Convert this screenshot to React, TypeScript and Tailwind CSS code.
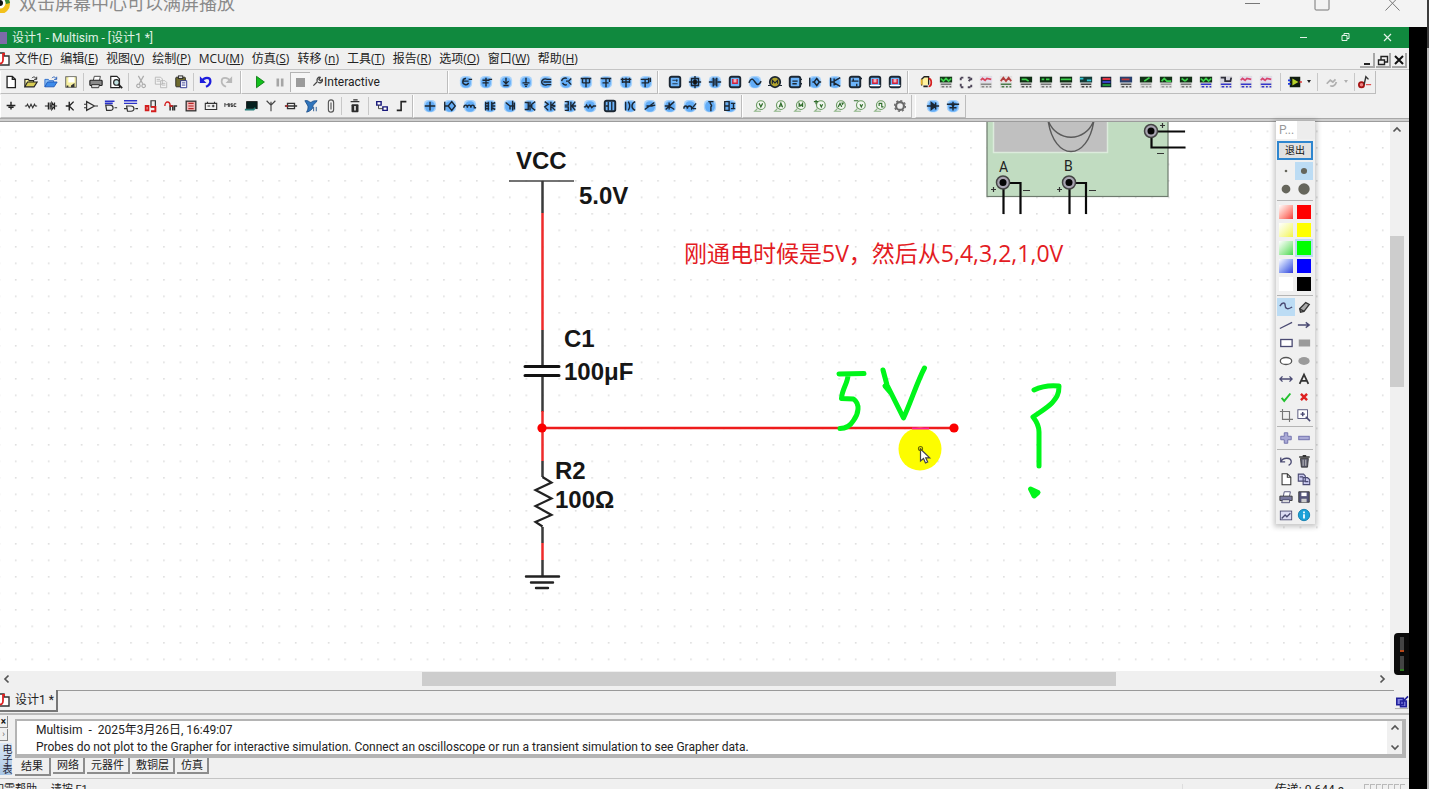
import React from "react";

type IconDef = { label: string; art: React.ReactNode };

const K = "#1c2733";

function blue(label: string, d: string, extra?: React.ReactNode): IconDef {
  return {
    label,
    art: (
      <>
        <rect x="1" y="1" width="14" height="14" rx="5" fill="#a9d3fb" />
        <rect x="2.500" y="2.500" width="11" height="12" rx="5" fill="#63adf7" />
        <path d={d} fill="none" stroke={K} strokeWidth="1.600" />
        {extra}
      </>
    ),
  };
}

function chip(label: string, inner: React.ReactNode): IconDef {
  return {
    label,
    art: (
      <>
        <rect x="2" y="2" width="12" height="12" rx="2" fill="#6cb4fa" stroke={K} strokeWidth="2.200" />
        {inner}
      </>
    ),
  };
}

function ink(label: string, d: string, color = "#222", width = 1.4, extra?: React.ReactNode): IconDef {
  return {
    label,
    art: (
      <>
        <path d={d} fill="none" stroke={color} strokeWidth={width} />
        {extra}
      </>
    ),
  };
}

function meter(label: string, screen: string, trace: string, traceColor: string, foot: string): IconDef {
  return {
    label,
    art: (
      <>
        <rect x="1" y="1" width="14" height="14" fill="#dedede" />
        <rect x="1" y="2" width="14" height="6.500" fill={screen} />
        <path d={trace} fill="none" stroke={traceColor} strokeWidth="2" />
        <path d="M2 10.500h12M3 13.500h3M8 13.500h2M12 13.500h2" fill="none" stroke={foot} strokeWidth="1.800" />
      </>
    ),
  };
}

function probe(label: string, mark: string): IconDef {
  return {
    label,
    art: (
      <>
        <circle cx="9" cy="7" r="5" fill="#f2f7f0" stroke="#6d9c64" strokeWidth="1.300" />
        <path d="M5 11l-3 3h7" fill="none" stroke="#8fb588" strokeWidth="1.400" />
        <path d={mark} fill="none" stroke="#2f6b2a" strokeWidth="1.300" />
      </>
    ),
  };
}

const fileIcons: IconDef[] = [
  { label: "新建", art: <path d="M3.500 1.500h6l3.500 3.500v9.500h-9.500zM9.500 1.500v3.500h3.500" fill="#fff" stroke="#222" strokeWidth="1.500" /> },
  {
    label: "打开",
    art: (
      <>
        <path d="M1 13.500V5h4l1 1.500h5V8" fill="#fdf7a0" stroke="#222" strokeWidth="1.300" />
        <path d="M1 13.500l3-5.500h11l-3.500 5.500z" fill="#d8cc55" stroke="#222" strokeWidth="1.300" />
        <path d="M9 3.500c2-2 4-1.500 5 1M14.500 2v3h-3" fill="none" stroke="#222" />
      </>
    ),
  },
  {
    label: "打开样本",
    art: (
      <>
        <path d="M1 13.500V5h4l1 1.500h5V8" fill="#8fc0f5" stroke="#2467c9" />
        <path d="M1 13.500l3-5.500h11l-3.500 5.500z" fill="#3d8bea" stroke="#1c55b5" />
        <path d="M9 3.500c2-2 4-1.500 5 1M14.500 2v3h-3" fill="none" stroke="#1c55b5" />
      </>
    ),
  },
  {
    label: "保存",
    art: (
      <>
        <rect x="2" y="2" width="12" height="12" fill="#f7f0a0" stroke="#555" />
        <rect x="5" y="2.500" width="7" height="6" fill="#fff" />
        <path d="M3 12h2v2H3zM12 9v5H8v-2z" fill="#333" />
      </>
    ),
  },
];

const printIcons: IconDef[] = [
  {
    label: "打印",
    art: (
      <>
        <path d="M5 6l1-4.500h7L12 6" fill="#fff" stroke="#333" />
        <rect x="1" y="6" width="14" height="6" rx="1" fill="#8b8b8b" stroke="#222" strokeWidth="1.300" />
        <path d="M3 11h9l-1 3.500H3z" fill="#ddd" stroke="#222" />
      </>
    ),
  },
  {
    label: "打印预览",
    art: (
      <>
        <path d="M2 1.500h7l3 3v10H2z" fill="#fff" stroke="#222" strokeWidth="1.300" />
        <circle cx="8.500" cy="8.500" r="3.200" fill="#c3e3e3" stroke="#222" strokeWidth="1.300" />
        <path d="M11 11l4 4" stroke="#222" strokeWidth="2.200" />
      </>
    ),
  },
];

const editIcons: IconDef[] = [
  ink("剪切", "M5 1l5 9M11 1L6 10", "#ababab", 1.4, <path d="M5 10.500a2 2 0 1 0 .1 0M11 10.500a2 2 0 1 0 .1 0" fill="none" stroke="#ababab" strokeWidth="1.300" />),
  { label: "复制", art: <path d="M1.500 2.500h6l2 2v6h-8zM7.500 6.500h5l2 2v6h-7zM3 5h4M3 7h4M9 9.500h4M9 11.500h4" fill="#f4f4f4" stroke="#b5b5b5" /> },
  {
    label: "粘贴",
    art: (
      <>
        <rect x="2" y="2.500" width="11" height="11" rx="1" fill="#6e6a2e" stroke="#222" />
        <rect x="5" y="1" width="5" height="3" fill="#ddd" stroke="#222" />
        <path d="M7.500 6.500h7v8h-7zM9 9h4M9 11.500h4" fill="#fff" stroke="#232c8c" />
      </>
    ),
  },
];

const undoIcons: IconDef[] = [
  ink("撤销", "M3 7c3-5 10-5 10 0 0 3-2 5-5 6.500", "#1d1ddd", 2.6, <path d="M1 1.500v7.500h7.500z" fill="#1d1ddd" />),
  ink("重做", "M13 7C10 2 3 2 3 7c0 3 2 5 5 6.500", "#b9b9b9", 2, <path d="M15 1.500v7.500H7.500z" fill="#b9b9b9" />),
];

const measureIcons: IconDef[] = [
  blue("电压源", "M4 7h7M8 4a3.500 3.500 0 1 0 3 5M11 5h4"),
  blue("电流源", "M4 6h8M4 9h7M8 3v10M11 5h4"),
  blue("接地", "M8 3v7M5 7l3 3 3-3M5 12h6"),
  blue("数字接地", "M8 3v6M4 9h8M6 11h4M7 13h2"),
  blue("三相源", "M3 8a4 4 0 0 1 6-3M3 8a4 4 0 0 0 6 3M5 8h9M9 5h5M9 11h5"),
  blue("三角源", "M3 7a4 4 0 0 1 6-3M4 9a4 4 0 0 0 5 2M8 7h3l3-3M11 8l3 3"),
  blue("双路源", "M2 4h12M8 4v10M4 4v5M12 4v5M4 9h8"),
  blue("信号源", "M2 4h12M8 4v10M4 9h7M12 4v4"),
  blue("脉冲源", "M2 5h12M8 3v11M4 3v6M12 3v6M4 8h8"),
  blue("时钟源", "M2 5h9M11 3v6M7 5v9M3 9h8M13 3v5"),
];

const red = <path d="M5.500 4.500v5h5v-5" fill="#f3aeb8" stroke="#cf1f3c" strokeWidth="1.600" />;

const virtualIcons: IconDef[] = [
  chip("电位器", <path d="M5 6h6M5 10h6M10 8V5" fill="none" stroke={K} />),
  blue("模拟芯片", "M1 8h14M8 1v14M4 4h8v8H4z", <rect x="6" y="5.500" width="4" height="5" fill="#111" />),
  blue("晶振", "M1 8h4M11 8h4M6 3v10M10 3v10M8 4v8"),
  chip("数码管", red),
  blue("保险丝", "M1 9c3-7 5-4 7-1s4 5 7-1"),
  {
    label: "电机",
    art: (
      <>
        <circle cx="8" cy="8" r="6" fill="#b3a52e" stroke={K} strokeWidth="2" />
        <path d="M5 10V6l3 3 3-3v4M0 12h4M12 12h4" fill="none" stroke={K} strokeWidth="1.300" />
      </>
    ),
  },
  chip("继电器", <path d="M14 5h2M14 10h2M5 7h6M5 10h5" fill="none" stroke={K} strokeWidth="1.500" />),
  blue("灯泡", "M2 3v10M5 8h2l3-4 3 4-3 4-3-4M13 8h2"),
  blue("晶体管", "M3 3v10M3 8h4M7 4v8M7 7l7-4M7 9l7 4"),
  chip("开关", <path d="M4 7h8M6 4v3M10 10v3M13 4h3" fill="none" stroke={K} strokeWidth="1.500" />),
  chip("七段显示", <>{red}<path d="M2 12h12" stroke="#fff" strokeWidth="1.500" /></>),
  chip("双位显示", <>{red}<path d="M2 12h12" stroke="#fff" strokeWidth="1.500" /></>),
];

const G = "#3bd24a";
const instrumentIcons: IconDef[] = [
  {
    label: "万用表",
    art: (
      <>
        <path d="M3 12V5l3-3h5v9" fill="#fff3a0" stroke="#222" strokeWidth="1.500" />
        <path d="M11 4c4 0 4 9 0 9" fill="none" stroke="#d61f1f" strokeWidth="2" />
        <path d="M5 13h5" stroke="#222" strokeWidth="2" />
        <path d="M3 5v6" stroke="#e5b12a" strokeWidth="2" />
      </>
    ),
  },
  meter("函数发生器", "#143a18", "M2 4l3 3 3-3 3 3 3-3", G, "#777"),
  { label: "瓦特计", art: <path d="M2 3h4M2 3v4M10 3h4v3M2 10v4h4M10 14h4v-4M11 7l3-3" fill="none" stroke="#4e4658" strokeWidth="2.200" strokeDasharray="3 1" /> },
  meter("示波器", "#e3dfee", "M2 6l2-2 3 2 2-2 5 1", "#d9455b", "#888"),
  meter("四通道示波器", "#e8e2e2", "M2 7l3-4 3 4 3-4 3 4", "#b23d3d", "#4b7a4b"),
  meter("波特测试仪", "#0f2f14", "M3 5h5l3 2", G, "#555"),
  meter("频率计", "#0f2f14", "M3 5h3M8 5h4", G, "#777"),
  meter("字发生器", "#0f2f14", "M2 5h12", G, "#555"),
  meter("逻辑转换仪", "#143a35", "M1 4h4M9 6h5", "#2fc6d6", "#444"),
  {
    label: "逻辑分析仪",
    art: (
      <>
        <rect x="2" y="2" width="12" height="12" fill="#123" />
        <path d="M4 4.500h9" stroke="#e03340" strokeWidth="2.500" />
        <path d="M4 8h9" stroke="#3a46d8" strokeWidth="2" />
        <path d="M4 11.500h9" stroke="#1f8f3a" strokeWidth="2.500" />
      </>
    ),
  },
  meter("伏安特性分析仪", "#27406e", "M3 5h9", "#c03838", "#555"),
  meter("失真分析仪", "#123016", "M6 7l6-4", G, "#999"),
  meter("频谱分析仪", "#123016", "M3 7l3-3 3 3h5", G, "#999"),
  meter("网络分析仪", "#123016", "M3 4l4 3M10 4l-3 3", G, "#777"),
  meter("安捷伦发生器", "#123016", "M2 4l3 3 3-3 3 3 3-3", G, "#3636c9"),
  meter("安捷伦万用表", "#d5d5de", "M2 3h5v4h6l1-4", "#30303a", "#3636c9"),
  meter("安捷伦示波器", "#e3dfee", "M2 6l2-2 3 2 2-2 5 1", "#d8456f", "#3636c9"),
  meter("泰克示波器", "#e3dfee", "M2 6l2-2 3 2 2-2 5 1", "#d8456f", "#3636c9"),
];

const partIcons: IconDef[] = [
  ink("电源", "M8 3v4M3 7.500h10M5 9.500h6M8 10v2", "#222", 1.6),
  ink("电阻", "M1 8h2l1-2 2 4 2-4 2 4 2-4 1 2h2", "#333", 1.3),
  ink("二极管", "M1 8h4M5 4v8M7 4v8M7 8h2M9 4l3 4-3 4zM12 4v8M12 8h3"),
  ink("晶体管", "M2 8h4M6 3v10M6 8l5-5M6 8l5 5", "#222", 1.6),
  ink("模拟器件", "M3 3l9 5-9 5zM0 6h3M0 10h3M12 8h4", "#333", 1.4),
  ink("TTL", "M2 7h5c4 0 5 6 0 6H3zM12 10h3", "#333", 1.4, <path d="M1 2.500h11M1 5h9" stroke="#2b32c9" strokeWidth="1.800" />),
  ink("CMOS", "M3 8h5c4 0 5 6 0 6H4zM0 11h3M13 11h3", "#333", 1.4, <path d="M0 2h15M0 5h15" stroke="#2b32c9" strokeWidth="1.500" />),
  ink("其他数字器件", "M8 9V2h5v7z", "#333", 1.4, <path d="M2 8v5h3V8zM8 9h5v5H8" fill="none" stroke="#d31c1c" strokeWidth="2.200" />),
  ink("混合器件", "M7 13V8h3v5M12 13V8h3", "#333", 1.7, <path d="M1 8c0-6 6-6 6 0h3" fill="none" stroke="#d31c1c" strokeWidth="1.600" />),
  { label: "指示器", art: <><rect x="2.500" y="2.500" width="11" height="11" fill="#f0b6b6" stroke="#333" strokeWidth="1.500" /><path d="M5 5h6M5 8h6M5 11h6" stroke="#b62727" strokeWidth="1.300" /></> },
  ink("功率器件", "M1.500 5h13v7h-13zM4 3v2M12 3v2M4 8h3M9 8h3M10.500 6.500v3", "#333", 1.3),
  ink("杂项", "M1 9V5l2 2 2-2v4M6.500 5v4M10 5.500H8v1.500h2v1.500H8M14 5.500h-2.500v3H14", "#333", 1.1),
  { label: "外设", art: <><rect x="3" y="3" width="12" height="8" fill="#06201f" stroke="#111" /><path d="M1 12h10l2-2" fill="none" stroke="#267c78" strokeWidth="2" /></> },
  ink("射频", "M8 14V7M3 2l5 5 5-5M8 7V3", "#444", 1.3),
  ink("机电器件", "M1 8h3M12 8h3M4 5h8v6H4zM4 8h8", "#333", 1.5, <path d="M2 8h2" stroke="#c22" strokeWidth="2" />),
  { label: "NI 器件", art: <path d="M1 2c4-1 5 2 7 2 2-2 4-2 7-2-2 3-4 4-5 6 1 3-3 6-7 7 2-4 2-6 1-8zM11 9v5M14 9v5" fill="#2f75bd" stroke="#1d4f8a" /> },
  ink("连接器", "M5 4c0-4 6-4 6 0v8c0 4-6 4-6 0zM8 4v8", "#555", 1.3),
];

const mcuIcons: IconDef[] = [
  { label: "微控制器", art: <><rect x="4" y="6" width="8" height="9" rx="1" fill="#2b2b2b" /><path d="M3 3h10M6 1h5" stroke="#333" strokeWidth="1.600" /><path d="M8 8v5" stroke="#ddd" strokeWidth="2" /></> },
];

const hierarchyIcons: IconDef[] = [
  { label: "层次块", art: <><path d="M2 3h5v4H2zM9 9h5v4H9z" fill="#fff" stroke="#16167a" strokeWidth="1.600" /><path d="M4 7v4h5" fill="none" stroke="#333" /></> },
  ink("总线", "M2 13h5V3h6", "#222", 1.8),
];

const basicIcons: IconDef[] = [
  blue("电容", "M2 8h12M8 3v10"),
  blue("可变元件", "M2 3v10M2 8h4M6 8l4-5 4 5-4 5z"),
  blue("线圈", "M1 10c0-4 4-4 4 0 0-4 4-4 4 0 0-4 4-4 4 0h2"),
  blue("变压器", "M3 3v10M6 3v10M3 5h4M3 8h4M3 11h4M10 3v10M14 4l-4 2M14 8h-4M14 12l-4-2"),
  blue("电位计", "M3 4l5 4v4M11 2v11M8 8h5M13 4v8"),
  blue("变压器二", "M2 4h4v8H2M6 8h4M14 3l-4 3v4l4 3M8 3v10"),
  blue("变压器三", "M2 3l4 3-4 3 4 4M9 3v10M14 3l-4 4 4 1-4 1 4 4"),
  blue("变压器四", "M2 3h4v4H2M2 9h4v4H2M9 3v10M14 3l-4 5 4 5M11 8h4"),
  blue("电阻", "M1 9h2l1-2 2 3 2-3 2 3 2-2h3"),
  chip("排阻", <path d="M6 3v10M10 3v10M3 8h3" fill="none" stroke={K} strokeWidth="1.500" />),
  blue("空心线圈", "M3 3v10M6 3c2 3 2 7 0 10M14 3c-5 2-5 8 0 10"),
  blue("可变电阻", "M2 12L13 4M4 8h7M9 8l5-1"),
  blue("上拉电阻", "M2 8h5M7 4v8M7 8l6-5M7 8l6 4M3 12l9-8"),
  blue("受控源", "M1 11c0-4 4-4 4 0 0-4 5-4 5 0l5-6M11 11h4"),
  blue("电压控制", "M6 3h6M9 3c-3 2 3 4 0 6v5"),
  blue("组合", "M2 3h5v10H2zM2 8h5M9 5h5M9 11h5M12 5v6"),
];

const probeIcons: IconDef[] = [
  probe("电压探针", "M7 5l2 4 2-4"),
  probe("电流探针", "M7 9.500l2-5 2 5M8 8h2"),
  probe("功率探针", "M7 9V5l2 3 2-3v4"),
  probe("差分探针", "M8 6l1.500 3L11 6M1 3h5M3.500 1v5"),
  probe("电压电流探针", "M6 9l2-4 2 4M10 4l1 2 1-2"),
  probe("参考探针", "M8 6l1.500 3L11 6M1 2h5"),
  probe("数字探针", "M7 8V5h3v4h2"),
  {
    label: "探针设置",
    art: <><circle cx="8" cy="8" r="4.500" fill="none" stroke="#6a6a6a" strokeWidth="2.500" /><circle cx="8" cy="8" r="6.200" fill="none" stroke="#6a6a6a" strokeWidth="1.500" strokeDasharray="2.400 2.400" /></>,
  },
];

const diodeIcons: IconDef[] = [
  blue("虚拟二极管", "M1 8h14M6 4l5 4-5 4zM11 4v8", <path d="M6 4l5 4-5 4z" fill={K} />),
  blue("稳压二极管", "M1 6h14M4 10h8M8 3v10", <path d="M5 5h6l-3 5z" fill={K} />),
];

function ToolButton({ icon }: { icon: IconDef }) {
  return (
    <button type="button" aria-label={icon.label} className="flex h-5 w-5 shrink-0 items-center justify-center">
      <svg viewBox="0 0 16 16" className="size-[14px]" aria-hidden="true">
        {icon.art}
      </svg>
    </button>
  );
}

function Group({ icons, className = "" }: { icons: IconDef[]; className?: string }) {
  return (
    <div className={`flex shrink-0 items-center ${className}`}>
      {icons.map((i) => (
        <ToolButton key={i.label} icon={i} />
      ))}
    </div>
  );
}

const bar = "flex h-[23px] shrink-0 items-center border-r border-b border-[#bdbdbd] border-l border-l-white";
const sep = "h-[18px] w-px shrink-0 bg-[#c8c8c8]";

const menus: [string, string][] = [
  ["文件", "F"],
  ["编辑", "E"],
  ["视图", "V"],
  ["绘制", "P"],
  ["MCU", "M"],
  ["仿真", "S"],
  ["转移 ", "n"],
  ["工具", "T"],
  ["报告", "R"],
  ["选项", "O"],
  ["窗口", "W"],
  ["帮助", "H"],
];

function DocIcon() {
  return (
    <svg viewBox="0 0 16 16" className="h-4 w-[11px] shrink-0" preserveAspectRatio="xMaxYMid slice" aria-hidden="true">
      <path d="M3 2h6v3h5v9H5" fill="#fff" stroke="#333" strokeWidth="1.400" />
      <path d="M10 3H8v6c0 3-2 4-4 3" fill="none" stroke="#d22" strokeWidth="1.800" />
    </svg>
  );
}

function PlayerBar() {
  return (
    <header className="flex h-[27px] shrink-0 items-start justify-between overflow-hidden bg-[#f3f3f3]">
      <div className="-mt-[5px] flex items-start gap-2">
        <svg viewBox="0 0 11 18" className="h-[18px] w-[11px]" aria-hidden="true">
          <circle cx="0" cy="9" r="10" fill="#f2c11d" />
          <path d="M2 0a10 10 0 0 1 8 8l-4 1z" fill="#3c8a35" />
          <circle cx="0" cy="8" r="5.500" fill="#fff" />
          <circle cx="0" cy="8" r="3" fill="#111" />
        </svg>
        <h1 className="text-[18px] leading-[18px] text-[#8a8a8a]">双击屏幕中心可以满屏播放</h1>
      </div>
      <div className="mr-[27px] flex gap-[54px] text-[#777]">
        <button type="button" aria-label="最小化" className="h-[14px] w-4">
          <svg viewBox="0 0 16 14" className="h-[14px] w-4"><path d="M1 3.500h15" stroke="currentColor" /></svg>
        </button>
        <button type="button" aria-label="最大化" className="h-[14px] w-4">
          <svg viewBox="0 0 16 14" className="h-[14px] w-4"><rect x="1" y="-4" width="14" height="14" rx="1" fill="none" stroke="currentColor" /></svg>
        </button>
        <button type="button" aria-label="关闭" className="h-[14px] w-4">
          <svg viewBox="0 0 16 14" className="h-[14px] w-4"><path d="M1.500-4l14 14.500M15.500-4L1.500 10.500" stroke="currentColor" /></svg>
        </button>
      </div>
    </header>
  );
}

function TitleBar() {
  return (
    <div className="flex h-[21px] shrink-0 items-center justify-between bg-[#10893e] text-[#e3f3e8]">
      <div className="flex items-center gap-[5px]">
        <span className="h-3 w-[7px] bg-[#7d6aa8]" />
        <span className="text-[12px] leading-none">设计1 - Multisim - [设计1 *]</span>
      </div>
      <div className="mr-4 flex gap-[31px]">
        <button type="button" aria-label="最小化" className="size-[11px]">
          <svg viewBox="0 0 11 11" className="size-[11px]"><path d="M2 5.500h7" stroke="currentColor" /></svg>
        </button>
        <button type="button" aria-label="还原" className="size-[11px]">
          <svg viewBox="0 0 11 11" className="size-[11px]"><path d="M2 3.500h5v5H2zM4 3.500v-2h5v5H7" fill="none" stroke="currentColor" /></svg>
        </button>
        <button type="button" aria-label="关闭" className="size-[11px]">
          <svg viewBox="0 0 11 11" className="size-[11px]"><path d="M2 2l7 7M9 2l-7 7" stroke="currentColor" strokeWidth="1.200" /></svg>
        </button>
      </div>
    </div>
  );
}

function MenuBar() {
  const mdi = "flex size-[15px] items-center justify-center border-r-2 border-b-2 border-[#a8a8a8] bg-[#f0f0f0]";
  return (
    <nav className="flex h-[22px] shrink-0 items-center justify-between border-b border-[#c4c4c4]">
      <div className="flex items-center">
        <DocIcon />
        <ul className='ml-1 flex items-center gap-2 font-["Open_Sans","Noto_Sans_CJK_SC",sans-serif] text-[12px] leading-none text-[#222]'>
          {menus.map(([name, key]) => (
            <li key={name}>
              <button type="button" className="whitespace-pre">
                {name}(<span className="underline">{key}</span>)
              </button>
            </li>
          ))}
        </ul>
      </div>
      <div className="mr-[2px] flex gap-px self-end pb-px">
        <button type="button" aria-label="最小化文档" className={mdi}>
          <svg viewBox="0 0 12 12" className="size-3"><path d="M3 10h6" stroke="#222" strokeWidth="2" /></svg>
        </button>
        <button type="button" aria-label="还原文档" className={mdi}>
          <svg viewBox="0 0 12 12" className="size-3"><path d="M1.500 6h6v4.500h-6zM4 6V2.500h6.500V8H8" fill="none" stroke="#222" strokeWidth="1.400" /></svg>
        </button>
        <button type="button" aria-label="关闭文档" className={mdi}>
          <svg viewBox="0 0 12 12" className="size-3"><path d="M2 2l8 8M10 2l-8 8" stroke="#111" strokeWidth="2" /></svg>
        </button>
      </div>
    </nav>
  );
}

function Toolbars() {
  return (
    <>
      <div className="flex h-6 shrink-0 items-center overflow-hidden">
        <div className={`${bar} w-[241px] justify-between pr-1`}>
          <Group icons={fileIcons} />
          <span className={sep} />
          <Group icons={printIcons} />
          <span className={sep} />
          <Group icons={editIcons} />
          <span className={sep} />
          <Group icons={undoIcons} />
        </div>
        <div className={`${bar} w-[207px] pl-2`}>
          <ToolButton icon={{ label: "运行", art: <path d="M4 1.500l9 6.500-9 6.500z" fill="#12c01c" stroke="#0d7a14" /> }} />
          <ToolButton icon={{ label: "暂停", art: <path d="M4 4h3v9H4zM9 4h3v9H9z" fill="#a5a5a5" /> }} />
          <button type="button" aria-label="停止" className="flex size-5 shrink-0 items-center justify-center border-t border-l border-[#b4b4b4] bg-[#f6f6f6]">
            <span className="size-[9px] bg-[#9c9c9c]" />
          </button>
          <button type="button" className="ml-[2px] flex items-center gap-px text-[12px] leading-none text-[#222]">
            <svg viewBox="0 0 16 16" className="size-[11px]" aria-hidden="true">
              <path d="M2 14l6-6M8 8c-2-3 1-7 4-6l-2 3 2 2 3-2c1 4-3 6-6 4" fill="none" stroke="#444" strokeWidth="1.800" />
            </svg>
            Interactive
          </button>
        </div>
        <div className={`${bar} w-[210px] pl-[7px]`}>
          <Group icons={measureIcons} />
        </div>
        <div className={`${bar} w-[250px] pl-[6px]`}>
          <Group icons={virtualIcons} />
        </div>
        <div className={`${bar} w-[468px] pl-[7px]`}>
          <Group icons={instrumentIcons} />
          <span className={`${sep} ml-1`} />
          <div className="flex shrink-0 items-center pl-1">
            <ToolButton icon={{ label: "探测器", art: <><rect x="2" y="2" width="12" height="12" fill="#101c10" /><path d="M5 4l7 4-7 4z" fill="#b7d32b" /><path d="M0 6h3M0 10h3" stroke="#1d39e0" strokeWidth="2" /><path d="M13 8h3" stroke="#d22" strokeWidth="1.500" /></> }} />
            <span className="mx-[2px] border-x-2 border-t-[3px] border-x-transparent border-t-[#222]" />
          </div>
          <span className={`${sep} ml-1`} />
          <div className="flex shrink-0 items-center pl-1">
            <ToolButton icon={{ label: "电流钳", art: <path d="M2 10l4-4 3 2 3-3M6 12c2 2 6 0 7-4" fill="none" stroke="#b0b0b0" strokeWidth="2" /> }} />
            <span className="mx-[2px] border-x-2 border-t-[3px] border-x-transparent border-t-[#b0b0b0]" />
          </div>
          <span className={`${sep} ml-1`} />
          <ToolButton icon={{ label: "LabVIEW", art: <><circle cx="4" cy="11" r="3" fill="#f08080" stroke="#a51313" strokeWidth="2" /><path d="M7 11l2-9 3 3" fill="none" stroke="#333" strokeWidth="1.600" /><path d="M9 11h6" stroke="#e05050" strokeWidth="1.400" /></> }} />
        </div>
      </div>
      <div className="flex h-6 shrink-0 items-center overflow-hidden">
        <div className={`${bar} w-[413px]`}>
          <Group icons={partIcons} />
          <span className={sep} />
          <Group icons={mcuIcons} className="px-[3px]" />
          <span className={sep} />
          <Group icons={hierarchyIcons} className="pl-[3px]" />
        </div>
        <div className={`${bar} w-[329px] pl-[6px]`}>
          <Group icons={basicIcons} />
        </div>
        <div className={`${bar} w-[170px] pl-[7px]`}>
          <Group icons={probeIcons} />
        </div>
        <div className={`${bar} ml-[3px] w-[51px] pl-[7px]`}>
          <Group icons={diodeIcons} />
        </div>
      </div>
    </>
  );
}

function Terminal({ x, y }: { x: number; y: number }) {
  return (
    <>
      <circle cx={x} cy={y} r="6.500" fill="#a7a3b0" stroke="#444" strokeWidth="1.500" />
      <circle cx={x} cy={y} r="3.500" fill="#050505" />
    </>
  );
}

function Schematic() {
  return (
    <svg className="block h-full w-full" role="img" aria-label="RC 电路原理图">
      <defs>
        <pattern id="grid" x="509" y="147" width="16.47" height="16.5" patternUnits="userSpaceOnUse">
          <rect width="1.600" height="1.600" fill="#dedede" />
        </pattern>
      </defs>
      <g transform="translate(0 -122)">
        <rect x="0" y="122" width="100%" height="100%" fill="#fff" />
        <rect x="0" y="122" width="100%" height="100%" fill="url(#grid)" />

        <g>
          <rect x="987" y="100" width="181" height="96.500" fill="#c1dcc1" stroke="#6d7a6d" strokeWidth="1.200" />
          <rect x="993.500" y="100" width="114" height="52.500" fill="#c0c0c0" stroke="#dcebdc" strokeWidth="1.500" />
          <path d="M1048 120c6 42 40 42 46 0M1048 120c8 23 38 23 46 0" fill="none" stroke="#5a5a5a" strokeWidth="1.400" />
          <path d="M1003.500 182v32M1003.500 183h17v31M1069.500 182v32M1069.500 183h16.500v31M1151 131.500h34M1151.500 131v16.500h34" fill="none" stroke="#0a0a0a" strokeWidth="2.200" />
          <Terminal x={1003} y={182.500} />
          <Terminal x={1069} y={182.500} />
          <Terminal x={1151} y={131} />
          <path d="M991 189.500h5M993.500 187v5M1057 189.500h5M1059.500 187v5M1160 125.500h5M1162.500 123v5M1023 190.500h7M1089 190.500h7M1157 153.500h7" stroke="#333" strokeWidth="1.200" />
          <text x="999" y="172" className="fill-[#222] text-[14px]">A</text>
          <text x="1064" y="171" className="fill-[#222] text-[14px]">B</text>
        </g>

        <g fill="none" strokeWidth="2.500">
          <path d="M509 181h65" stroke="#444" strokeWidth="1.500" />
          <path d="M542.500 181v32M542.500 330v36M542.500 376v36M542.500 461v16M542.500 527v16M542.500 560v16" stroke="#3a3a3a" />
          <path d="M542.500 213v117M542.500 411v50M542.500 543v17" stroke="#ee2b2b" />
          <path d="M525 366.500h34M525 375.500h34" stroke="#111" strokeWidth="3" strokeLinecap="round" />
          <path d="M542.500 477l9 5.500-16 7.500 16 8.500-16 7.500 16 9-16 7 7 4.500" stroke="#222" strokeWidth="2.200" />
          <path d="M526 576.500h33M531 582.500h22M536 588h12" stroke="#222" strokeWidth="2.400" strokeLinecap="round" />
          <path d="M542 428h412" stroke="#ee1c1c" />
        </g>
        <circle cx="542" cy="428" r="4.600" fill="#fb0000" />
        <circle cx="954" cy="428" r="4.600" fill="#fb0000" />
        <g className='fill-[#161616] font-["Liberation_Sans",Arial,sans-serif] text-[24px] font-bold'>
          <text x="516" y="169">VCC</text>
          <text x="579" y="204">5.0V</text>
          <text x="564" y="347">C1</text>
          <text x="564" y="380">100μF</text>
          <text x="555" y="479">R2</text>
          <text x="555" y="508">100Ω</text>
        </g>
        <text x="684" y="262" className='fill-[#e31b23] font-["Open_Sans","Noto_Sans_CJK_SC",sans-serif] text-[23px]'>刚通电时候是5V，然后从5,4,3,2,1,0V</text>

        <circle cx="920" cy="449" r="21.500" fill="#fdfd00" />
        <path d="M912 428.500h17" stroke="#ff1e9c" strokeWidth="2" />
        <path d="M920.500 449v12l3-2.500 2 4.500 2.200-1-2-4.200h4z" fill="#fff" stroke="#444" strokeWidth="1.200" />
        <circle cx="920.500" cy="448.500" r="2" fill="none" stroke="#6b6b00" strokeWidth="1.200" />

        <g fill="none" stroke="#00f51a" strokeWidth="5" strokeLinecap="round" strokeLinejoin="round">
          <path d="M839 374l25-.5M848 375c0 8-6 14-6.500 23.500l12 .5c7 5 5 15 0 21.500-3 5-7 8-13.500 8" />
          <path d="M883 370l4 15 16.500 33c7-15 14-37 21-50M885 386l6 7" />
          <path d="M1034 390c8-4 15-5 25-4 0 8-2 11-7 17-5 5-12 9-19 14 4 5 6 9 6 15v34" />
          <path d="M1030.500 489l3.500 7 4-3.500z" fill="#00f51a" />
        </g>
      </g>
    </svg>
  );
}

type Tool = { label: string; art: React.ReactNode; active?: boolean };

const P = "#4a4a72";
const sizeTools: Tool[] = [
  { label: "细笔", art: <circle cx="8" cy="8" r="1.500" fill="#66665c" /> },
  { label: "中笔", art: <circle cx="8" cy="8" r="3.500" fill="#66665c" />, active: true },
  { label: "粗笔", art: <circle cx="8" cy="8" r="5" fill="#66665c" /> },
  { label: "特粗笔", art: <circle cx="8" cy="8" r="6.500" fill="#66665c" /> },
];

const drawTools: Tool[] = [
  { label: "曲线", art: <path d="M1 7c3-5 6-4 6-1s2 6 8 2" fill="none" stroke={P} strokeWidth="1.600" />, active: true },
  { label: "橡皮", art: <path d="M3 10l7-7 4 2-6 8-4 1zM3 10l5 3" fill="#a9a9a9" stroke="#333" strokeWidth="1.500" /> },
  { label: "直线", art: <path d="M1 12L15 5" stroke={P} strokeWidth="1.500" /> },
  { label: "箭头", art: <path d="M1 8h13M10 5l4 3-4 3" fill="none" stroke={P} strokeWidth="1.500" /> },
  { label: "矩形", art: <rect x="2" y="4" width="13" height="8" fill="#fff" stroke={P} strokeWidth="1.500" /> },
  { label: "实心矩形", art: <rect x="2" y="4" width="13" height="8" fill="#9a9a9a" /> },
  { label: "椭圆", art: <ellipse cx="8" cy="8" rx="6.500" ry="4" fill="#fff" stroke="#555" strokeWidth="1.500" /> },
  { label: "实心椭圆", art: <ellipse cx="8" cy="8" rx="6.500" ry="4.500" fill="#9a9a9a" /> },
  { label: "双向箭头", art: <path d="M1 8h14M4 5L1 8l3 3M12 5l3 3-3 3" fill="none" stroke={P} strokeWidth="1.500" /> },
  { label: "文字", art: <path d="M3 13.500L8 3l5 10.500M5 10h6" fill="none" stroke="#333" strokeWidth="2" /> },
  { label: "对勾", art: <path d="M3 9l3 3.500L13 4" fill="none" stroke="#22c12f" strokeWidth="2.200" /> },
  { label: "叉号", art: <path d="M4.500 4.500l7 7M11.500 4.500l-7 7" stroke="#dd1f1f" strokeWidth="2.800" /> },
  { label: "截图", art: <path d="M4 1v12h12M1 4h11v12" fill="none" stroke="#777" strokeWidth="1.300" /> },
  { label: "放大", art: <><rect x="1" y="2" width="11" height="10" fill="#fff" stroke={P} /><path d="M4 7h5M6.500 4.500v5M10 10l5 5" stroke={P} strokeWidth="1.700" /></> },
];

const stepTools: Tool[] = [
  { label: "增加", art: <path d="M6 2h4v4h4v4h-4v4H6v-4H2V6h4z" fill="#a9a9d6" stroke="#6a6aa8" /> },
  { label: "减少", art: <rect x="2" y="6" width="12" height="4" fill="#a9a9d6" stroke="#6a6aa8" /> },
];

const fileTools: Tool[] = [
  { label: "撤消笔画", art: <path d="M2 4v5h5M2 9c3-6 12-5 12 0 0 2-1 3-3 4" fill="none" stroke={P} strokeWidth="1.500" /> },
  { label: "清空", art: <><path d="M4 5h9l-1 10H5z" fill="#5d5d6e" stroke="#333" /><path d="M2.500 3.500h12M6.500 2h4" stroke="#333" strokeWidth="1.700" /><path d="M7 6.500v7M10 6.500v7" stroke="#ccc" /></> },
  { label: "新页", art: <path d="M3.500 2h6l4 4v8.500h-10zM9.500 2v4h4" fill="#fff" stroke="#333" strokeWidth="1.200" /> },
  { label: "复制页", art: <path d="M1.500 2.500h6l2 2v6h-8zM7 6.500h5l2.500 2v6H7zM3 5.500h4M9 11h4" fill="#c8c8ee" stroke={P} strokeWidth="1.300" /> },
  { label: "打印批注", art: <><path d="M5 7l1-5h7l-1 5" fill="#fff" stroke={P} /><path d="M1 7h14v5H1z" fill="#7b7ba0" stroke="#333" /><path d="M4 11h8v3.500H3z" fill="#ddd" stroke={P} /></> },
  { label: "保存批注", art: <><path d="M2 2h12v12H2z" fill="#55557a" stroke="#333" /><path d="M5 3h6v4H5z" fill="#fff" /><path d="M5 10h6v4H5z" fill="#ccc" /></> },
  { label: "图片", art: <><rect x="1.500" y="3.500" width="13" height="10" fill="#dcdcf4" stroke={P} /><path d="M3 12l4-4 2 2 4-4" fill="none" stroke={P} strokeWidth="1.500" /></> },
  { label: "关于", art: <><circle cx="8" cy="8" r="6.500" fill="#1ba1d8" stroke="#0f7cab" /><path d="M8 7v5M8 4v2" stroke="#fff" strokeWidth="2" /></> },
];

const swatches = [
  ["浅红", "bg-linear-to-br from-white to-[#ee3a3a]"],
  ["红", "bg-[#ff0000]"],
  ["浅黄", "bg-linear-to-br from-white to-[#f4f43a]"],
  ["黄", "bg-[#ffff00]"],
  ["浅绿", "bg-linear-to-br from-white to-[#3ad84a]"],
  ["绿", "bg-[#00ff00]"],
  ["浅蓝", "bg-linear-to-br from-white to-[#3a3ad8]"],
  ["蓝", "bg-[#0000ff]"],
  ["白", "bg-white"],
  ["黑", "bg-black"],
];

function ToolGrid({ tools }: { tools: Tool[] }) {
  return (
    <div className="grid grid-cols-2">
      {tools.map((t) => (
        <button
          key={t.label}
          type="button"
          aria-label={t.label}
          className={`flex h-[18px] items-center justify-center ${t.active ? "bg-[#bcdcf4]" : ""}`}
        >
          <svg viewBox="0 0 16 16" className="size-[14px]" aria-hidden="true">
            {t.art}
          </svg>
        </button>
      ))}
    </div>
  );
}

const Rule = () => <div className="my-[2px] h-px bg-[#b5b5b5]" />;

function Palette() {
  return (
    <aside className="absolute -top-px right-[94px] z-10 w-[39px] bg-[#f0f0f0] pr-[2px] pl-px shadow-[0_1px_5px_2px_rgba(0,0,0,0.22)]">
      <div className="-mr-[2px] -ml-px flex h-[18px] items-center justify-between bg-white text-[12px] leading-none text-[#999]">
        <span className="pl-[3px]">P...</span>
        <span className="h-[18px] w-[18px] bg-[#ededed]" />
      </div>
      <button type="button" className="my-[2px] flex h-[19px] w-full items-center justify-center border-2 border-[#2f86cf] bg-[#e1e1e1] text-[10px] leading-none text-[#111]">
        退出
      </button>
      <ToolGrid tools={sizeTools} />
      <Rule />
      <div className="grid grid-cols-2">
        {swatches.map(([name, fill]) => (
          <button
            key={name}
            type="button"
            aria-label={name}
            className={`flex h-[18px] items-center justify-center ${name === "绿" ? "bg-[#bcdcf4]" : ""}`}
          >
            <span className={`size-[14px] ${fill}`} />
          </button>
        ))}
      </div>
      <Rule />
      <ToolGrid tools={drawTools} />
      <Rule />
      <ToolGrid tools={stepTools} />
      <Rule />
      <ToolGrid tools={fileTools} />
    </aside>
  );
}

function Chevron({ d, label }: { d: string; label: string }) {
  return (
    <button type="button" aria-label={label} className="flex size-[14px] items-center justify-center">
      <svg viewBox="0 0 10 10" className="size-[10px]" aria-hidden="true">
        <path d={d} fill="none" stroke="#555" strokeWidth="1.700" />
      </svg>
    </button>
  );
}

const UP = "M1.500 6.500L5 3l3.500 3.500";
const DOWN = "M1.500 3.500L5 7l3.500-3.500";
const LEFT = "M6.500 1.500L3 5l3.500 3.500";
const RIGHT = "M3.500 1.500L7 5l-3.500 3.500";

function Workspace() {
  return (
    <main className="relative flex min-h-0 flex-1 flex-col">
      <div className="flex min-h-0 flex-1">
        <div className="min-w-0 flex-1 overflow-hidden">
          <Schematic />
        </div>
        <div className="mr-[5px] flex w-[14px] shrink-0 flex-col items-center bg-[#f0f0f0] pt-px">
          <Chevron d={UP} label="向上滚动" />
          <span className="h-[18%]" />
          <span className="h-[151px] w-full bg-[#cdcdcd]" />
        </div>
      </div>
      <div className="flex h-[16px] shrink-0 items-center pr-5">
        <Chevron d={LEFT} label="向左滚动" />
        <div className="flex flex-1 justify-center">
          <span className="ml-[149px] h-[14px] w-[51%] bg-[#cdcdcd]" />
        </div>
        <Chevron d={RIGHT} label="向右滚动" />
      </div>
      <Palette />
      <div className="absolute right-0 bottom-[12px] flex h-[42px] w-[15px] flex-col items-center justify-center gap-1 rounded-l-sm bg-[#0a0a0a]">
        <span className="h-[15px] w-1 border-b-2 border-[#b5481b] bg-[#444]" />
        <span className="h-[15px] w-1 border-b-2 border-[#2f7a1f] bg-[#444]" />
      </div>
    </main>
  );
}

function SheetTabs() {
  return (
    <div className="mt-[3px] flex h-[25px] shrink-0 items-start justify-between border-b-2 border-[#b9b9b9]">
      <button type="button" className="flex h-[22px] items-center gap-1 border-r-2 border-b-2 border-[#777] pr-[2px] text-[12px] leading-none text-[#222]">
        <DocIcon />
        设计1 *
      </button>
      <span className="h-px flex-1 bg-[#999]" />
      <button type="button" aria-label="切换视图" className="mt-1 h-4 w-[15px]">
        <svg viewBox="0 0 16 16" className="h-4 w-[15px]" aria-hidden="true">
          <path d="M3 4h7v7H3zM7 7h6v6H7zM9 8l6-6" fill="#8080e0" stroke="#20209a" strokeWidth="1.700" />
          <path d="M1 15h14V6" fill="none" stroke="#aaa" />
        </svg>
      </button>
    </div>
  );
}

function OutputPanel() {
  const tabs = ["结果", "网络", "元器件", "敷铜层", "仿真"];
  return (
    <section className="flex h-[63px] shrink-0">
      <div className="flex w-[15px] shrink-0 flex-col items-start">
        <button type="button" aria-label="关闭面板" className="mt-px flex h-3 w-2 items-center justify-center border-r border-b border-[#888] text-[10px] leading-none font-bold text-[#111]">
          ×
        </button>
        <button type="button" aria-label="隐藏面板" className="mt-px flex h-3 w-2 items-center justify-center border-r border-b border-[#888] text-[9px] leading-none text-[#666]">
          ›
        </button>
        <div className="mt-[2px] flex h-8 w-3 items-center justify-center bg-linear-to-b from-[#dbe8f5] to-[#a9c6e4] text-[10px] leading-3 text-[#223] [writing-mode:vertical-rl]">
          电子表
        </div>
      </div>
      <div className="flex min-w-0 flex-1 flex-col pt-1 pr-[3px]">
        <div className="flex h-[39px] shrink-0 border-t-2 border-r-4 border-b-4 border-l-2 border-[#b4b4b4] bg-white">
          <div className="min-w-0 flex-1 pt-px pl-[19px] text-[12px] leading-[17px] whitespace-pre text-[#222]">
            <p>Multisim  -  2025年3月26日, 16:49:07</p>
            <p>Probes do not plot to the Grapher for interactive simulation. Connect an oscilloscope or run a transient simulation to see Grapher data.</p>
          </div>
          <div className="flex w-[15px] flex-col items-center justify-between bg-[#f0f0f0]">
            <Chevron d={UP} label="上一行" />
            <Chevron d={DOWN} label="下一行" />
          </div>
        </div>
        <div className="flex items-start gap-[2px]" role="tablist">
          {tabs.map((t, i) => (
            <button
              key={t}
              type="button"
              role="tab"
              aria-selected={i === 0}
              className="h-4 border-r-2 border-b-2 border-[#8c8c8c] px-1 text-[11px] leading-none text-[#222] first:h-[18px] first:px-[6px]"
            >
              {t}
            </button>
          ))}
        </div>
      </div>
    </section>
  );
}

function StatusBar() {
  return (
    <footer className="flex h-[11px] shrink-0 items-start justify-between overflow-hidden border-t border-[#c4c4c4] text-[11px] leading-none whitespace-pre text-[#222]">
      <p className="-ml-[7px] pt-[5px]">如需帮助， 请按 F1</p>
      <div className="flex gap-5 pt-[5px] pr-1">
        <span className="border-l border-[#ddd] pl-[92px] text-[12px] leading-none">传递: 0.644 s</span>
        <span className="flex gap-px">
          {[0, 1, 2, 3, 4, 5, 6].map((n) => (
            <span key={n} className="h-3 w-[5px] border-t border-l border-[#b9b9b9]" />
          ))}
        </span>
      </div>
    </footer>
  );
}

export default function App() {
  return (
    <div className='flex h-screen flex-col overflow-hidden bg-black font-["Roboto","Noto_Sans_CJK_SC",sans-serif]'>
      <div className="flex min-h-0 flex-1">
        <div className="flex min-w-0 flex-1 flex-col">
          <PlayerBar />
          <div className="mr-[18px] flex min-h-0 flex-1 flex-col bg-[#f0f0f0]">
            <TitleBar />
            <MenuBar />
            <Toolbars />
            <div className="h-1 shrink-0 border-y border-t-[#a8a8a8] border-b-[#9c9c9c] bg-[#cfcfcf]" />
            <Workspace />
            <SheetTabs />
            <OutputPanel />
            <StatusBar />
          </div>
        </div>
        <div className="flex w-[2px] shrink-0 flex-col">
          <span className="h-12 bg-[#3c3c3c]" />
          <span className="flex-1 bg-[#b4b4b4]" />
        </div>
      </div>
    </div>
  );
}
